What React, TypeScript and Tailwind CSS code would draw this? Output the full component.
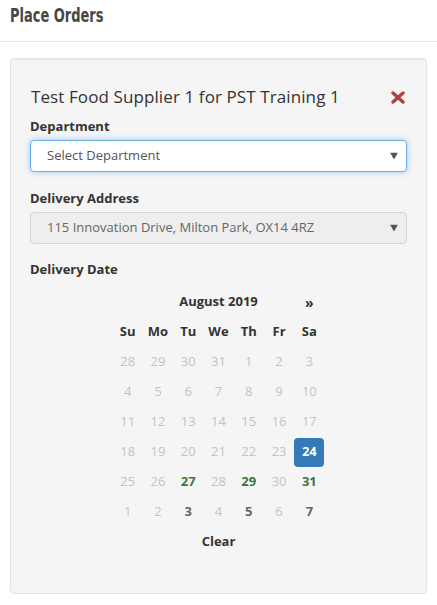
import React from "react";

type Cell = { d: number; kind: "off" | "green" | "bold" | "sel" };

const rows: Cell[][] = [
  [28, 29, 30, 31, 1, 2, 3].map((d) => ({ d, kind: "off" as const })),
  [4, 5, 6, 7, 8, 9, 10].map((d) => ({ d, kind: "off" as const })),
  [11, 12, 13, 14, 15, 16, 17].map((d) => ({ d, kind: "off" as const })),
  [
    ...[18, 19, 20, 21, 22, 23].map((d) => ({ d, kind: "off" as const })),
    { d: 24, kind: "sel" as const },
  ],
  [
    { d: 25, kind: "off" },
    { d: 26, kind: "off" },
    { d: 27, kind: "green" },
    { d: 28, kind: "off" },
    { d: 29, kind: "green" },
    { d: 30, kind: "off" },
    { d: 31, kind: "green" },
  ],
  [
    { d: 1, kind: "off" },
    { d: 2, kind: "off" },
    { d: 3, kind: "bold" },
    { d: 4, kind: "off" },
    { d: 5, kind: "bold" },
    { d: 6, kind: "off" },
    { d: 7, kind: "bold" },
  ],
];

const Arrow = () => (
  <svg width="8" height="7" viewBox="0 0 8 7" className="absolute right-[8px] top-1/2 -translate-y-1/2">
    <polygon points="0,0 8,0 4,7" fill="#555" />
  </svg>
);

export default function App() {
  return (
    <div className="w-[437px] h-[605px] bg-white" style={{ fontFamily: '"Open Sans", sans-serif' }}>
      <div className="h-[42px] border-b border-[#e7e7e7] pl-[10px] pt-[3px]">
        <div
          className="inline-block origin-left scale-x-[0.76] text-[19px] leading-[24px] font-bold text-[#474747]"
          style={{ fontFamily: '"DejaVu Sans", sans-serif', fontStretch: "condensed" }}
        >
          Place Orders
        </div>
      </div>
      <div className="mx-[10px] mt-[16px] h-[536px] rounded-[4px] border border-[#e3e3e3] bg-[#f5f5f5] shadow-[inset_0_1px_1px_rgba(0,0,0,0.05)] px-[19px] pt-[28px]">
        <div className="flex h-[20px] items-center justify-between">
          <div className="text-[17px] leading-[20px] text-[#333] pl-px tracking-[0.1px]">Test Food Supplier 1 for PST Training 1</div>
          <svg width="14" height="13" viewBox="0 0 14 13" className="mr-[2px]">
            <path d="M2 2 L12 11 M12 2 L2 11" stroke="#a94442" strokeWidth="3.4" strokeLinecap="round" />
          </svg>
        </div>
        <div className="mt-[9px] h-[20px] text-[13px] leading-[20px] font-bold text-[#333]">Department</div>
        <div className="relative mt-[4px] h-[32px] rounded-[4px] border border-[#66afe9] bg-white shadow-[0_0_6px_rgba(102,175,233,0.6)] pl-[16px] flex items-center text-[13px] text-[#555]">
          Select Department
          <Arrow />
        </div>
        <div className="mt-[16px] h-[20px] text-[13px] leading-[20px] font-bold text-[#333]">Delivery Address</div>
        <div className="relative mt-[4px] h-[32px] rounded-[4px] border border-[#d5d5d5] bg-[#eeeeee] pl-[16px] flex items-center text-[13px] text-[#666]">
          115 Innovation Drive, Milton Park, OX14 4RZ
          <Arrow />
        </div>
        <div className="mt-[15px] h-[20px] text-[13px] leading-[20px] font-bold text-[#333]">Delivery Date</div>
        <div className="mx-auto mt-[8px] w-[212px] text-[13px]">
          <div className="grid grid-cols-7 h-[30px] items-center">
            <div />
            <div className="col-span-5 text-center font-bold text-[#333]">August 2019</div>
            <div className="text-center font-bold text-[#333] text-[14px]">»</div>
          </div>
          <div className="grid grid-cols-7 h-[30px] items-center">
            {["Su", "Mo", "Tu", "We", "Th", "Fr", "Sa"].map((d) => (
              <div key={d} className="text-center font-bold text-[#333]">
                {d}
              </div>
            ))}
          </div>
          {rows.map((r, i) => (
            <div key={i} className="grid grid-cols-7 h-[30px] items-center">
              {r.map((c, j) => (
                <div key={j} className="flex justify-center">
                  {c.kind === "sel" ? (
                    <div className="flex h-[29px] w-[30px] items-center justify-center rounded-[4px] bg-[#337ab7] font-bold text-white">
                      {c.d}
                    </div>
                  ) : (
                    <span
                      className={
                        c.kind === "off"
                          ? "text-[#c3c3c3]"
                          : c.kind === "green"
                          ? "font-bold text-[#3c763d]"
                          : "font-bold text-[#666]"
                      }
                    >
                      {c.d}
                    </span>
                  )}
                </div>
              ))}
            </div>
          ))}
          <div className="h-[30px] flex items-center justify-center font-bold text-[#333]">Clear</div>
        </div>
      </div>
    </div>
  );
}
